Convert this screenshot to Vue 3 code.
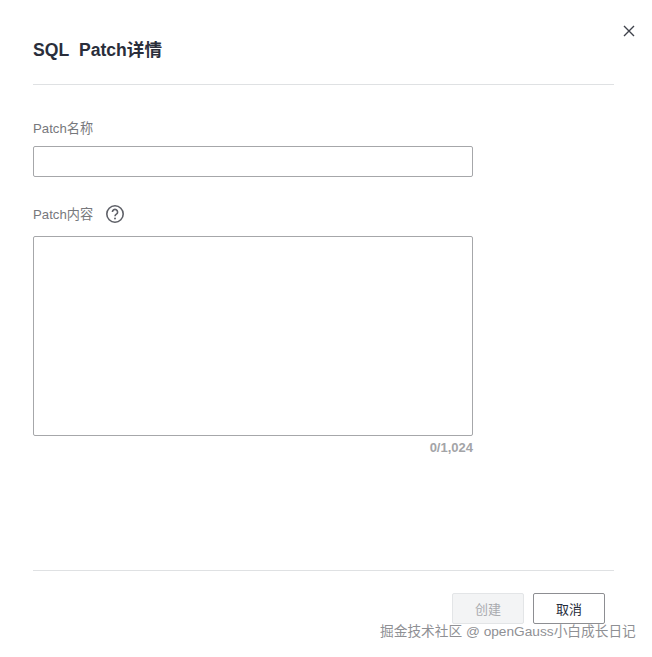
<script setup>
</script>

<template>
  <div class="dialog">
    <button class="close" aria-label="close">
      <svg width="12" height="12" viewBox="0 0 12 12"><path d="M1 1L11 11M11 1L1 11" stroke="#3f424b" stroke-width="1.4" fill="none" /></svg>
    </button>
    <header class="head"><h1 class="title">SQL&nbsp; Patch详情</h1></header>
    <main class="body">
      <label class="label first">Patch名称</label>
      <input class="input" />
      <div class="label second">
        <span class="label-text">Patch内容</span>
        <svg class="help" width="20" height="20" viewBox="0 0 20 20">
          <circle cx="10" cy="10" r="8.2" stroke="#5f6168" stroke-width="1.6" fill="none" />
          <path d="M7.4 8a2.6 2.6 0 1 1 4 2.2c-.9.6-1.4 1-1.4 2.1" stroke="#5f6168" stroke-width="1.6" fill="none" />
          <circle cx="10" cy="14.6" r="1" fill="#5f6168" />
        </svg>
      </div>
      <div class="area"></div>
      <div class="count">0/1,024</div>
    </main>
    <footer class="foot">
      <button class="btn disabled">创建</button>
      <button class="btn">取消</button>
    </footer>
    <div class="mark">掘金技术社区 @ openGauss小白成长日记</div>
  </div>
</template>

<style scoped>
.dialog {
  position: relative;
  width: 652px;
  height: 657px;
  box-sizing: border-box;
  padding: 0 38px 0 33px;
  background: #fff;
  font-family: "Liberation Sans", "Noto Sans CJK SC", sans-serif;
  display: flex;
  flex-direction: column;
  overflow: hidden;
}
.close {
  position: absolute;
  top: 25px;
  left: 623px;
  width: 12px;
  height: 12px;
  padding: 0;
  border: 0;
  background: none;
  display: flex;
}
.head {
  height: 85px;
  box-sizing: border-box;
  border-bottom: 1px solid #dfe1e3;
  padding-top: 39px;
}
.title {
  margin: 0;
  font-size: 17.6px;
  line-height: 22px;
  font-weight: 700;
  color: #2a2e3b;
}
.body {
  flex: 1;
  display: flex;
  flex-direction: column;
  align-items: flex-start;
}
.label {
  font-size: 13.2px;
  line-height: 18px;
  color: #77787c;
}
.first { margin-top: 35px; }
.second {
  margin-top: 27px;
  display: flex;
  align-items: center;
  gap: 12px;
  height: 20px;
}
.label-text { margin-top: 2px; }
.input {
  display: block;
  box-sizing: border-box;
  width: 440px;
  height: 31px;
  margin-top: 8px;
  border: 1px solid #a6a7aa;
  border-radius: 2px;
  outline: none;
  background: #fff;
}
.area {
  box-sizing: border-box;
  width: 440px;
  height: 200px;
  margin-top: 12px;
  border: 1px solid #a6a7aa;
  border-radius: 2px;
}
.count {
  width: 440px;
  margin-top: 4px;
  text-align: right;
  font-size: 13px;
  line-height: 16px;
  font-weight: 700;
  color: #a3a4a7;
}
.foot {
  height: 87px;
  box-sizing: border-box;
  border-top: 1px solid #dfe1e3;
  padding: 22px 9px 0 0;
  display: flex;
  justify-content: flex-end;
  align-items: flex-start;
  gap: 9px;
}
.btn {
  width: 72px;
  height: 31px;
  padding: 0;
  background: #fff;
  border: 1px solid #8d8e92;
  border-radius: 2px;
  font: 13px "Liberation Sans", "Noto Sans CJK SC", sans-serif;
  color: #252b3a;
}
.btn.disabled {
  background: #f3f4f5;
  border-color: #e3e5e7;
  color: #a9abaf;
}
.mark {
  position: absolute;
  left: 380px;
  top: 623px;
  font-size: 13.7px;
  line-height: 18px;
  white-space: nowrap;
  color: #8f9094;
}
</style>
